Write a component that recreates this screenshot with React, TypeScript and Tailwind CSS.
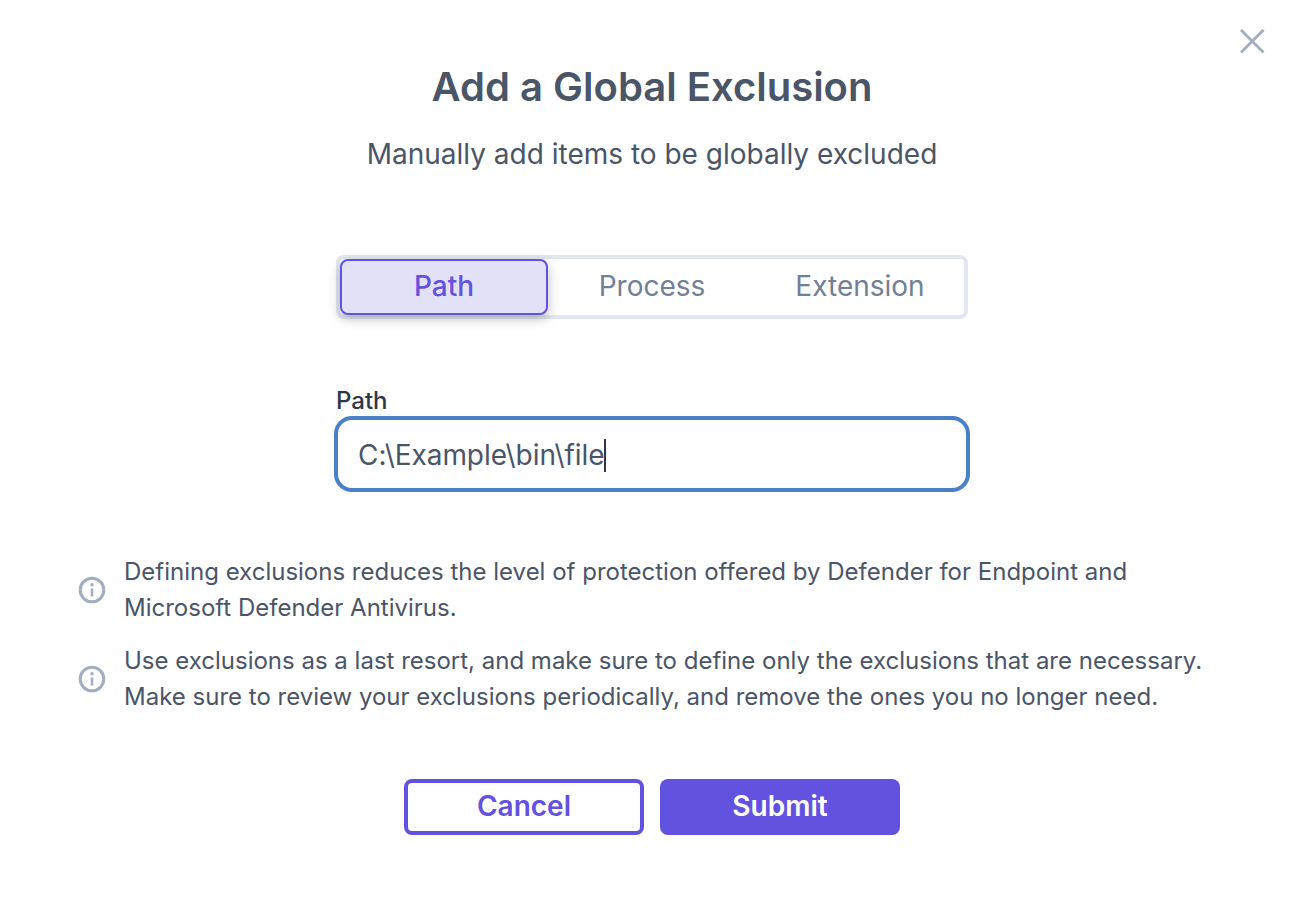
import React from "react";

function InfoIcon() {
  return (
    <svg width="28" height="28" viewBox="0 0 28 28" fill="none" className="shrink-0">
      <circle cx="14" cy="14" r="11.8" stroke="#a0aec0" strokeWidth="3" />
      <rect x="12.7" y="12.5" width="2.6" height="8" fill="#a0aec0" />
      <circle cx="14" cy="8.8" r="1.7" fill="#a0aec0" />
    </svg>
  );
}

function Notice({ lines }: { lines: string[] }) {
  return (
    <div className="flex items-center gap-[18px]">
      <InfoIcon />
      <p className="text-[24px] leading-[36px] text-[#4a5568]">
        {lines[0]}
        <br />
        {lines[1]}
      </p>
    </div>
  );
}

export default function App() {
  return (
    <div className="relative flex h-[906px] w-[1298px] flex-col items-center bg-white pl-[6px] pt-[60px] font-['Inter',sans-serif]">
      <svg width="28" height="28" viewBox="0 0 28 28" fill="none" className="absolute left-[1238px] top-[27px]">
        <path d="M3 3L25.5 25.5M25.5 3L3 25.5" stroke="#a0aec0" strokeWidth="2.8" />
      </svg>

      <h1 className="text-[40px] font-semibold leading-[54px] text-[#4a5568]">Add a Global Exclusion</h1>
      <p className="mt-[20px] text-[28px] leading-[40px] text-[#4a5568]">
        Manually add items to be globally excluded
      </p>

      <div className="mt-[81px] flex h-[64px] w-[632px] rounded-lg border-4 border-[#e2e8f0] bg-white text-[28px]">
        <button className="h-[56px] w-[208px] rounded-lg border-2 border-[#6351e0] bg-[#e3e1f8] pb-[2px] font-medium text-[#6351e0] shadow-[0_4px_12px_rgba(0,0,0,0.25)]">
          Path
        </button>
        <button className="h-[56px] w-[208px] pb-[2px] text-[#718096]">Process</button>
        <button className="h-[56px] w-[208px] pb-[2px] text-[#718096]">Extension</button>
      </div>

      <div className="mt-[66px] w-[636px]">
        <label className="block pl-[2px] text-[24px] font-medium leading-[31px] text-[#2d3748]">Path</label>
        <div className="flex h-[76px] items-center rounded-[18px] border-4 border-[#4a80c8] pl-[20px] pt-[2px] text-[28px] tracking-[-0.05px] text-[#4a5568]">
          <span>C:\Example\bin\file</span>
          <span className="-ml-px h-[33px] w-[2px] bg-[#2d3748]" />
        </div>
      </div>

      <div className="mt-[62px] flex w-[1292px] flex-col gap-[17px] pl-[72px]">
        <Notice
          lines={[
            "Defining exclusions reduces the level of protection offered by Defender for Endpoint and",
            "Microsoft Defender Antivirus.",
          ]}
        />
        <Notice
          lines={[
            "Use exclusions as a last resort, and make sure to define only the exclusions that are necessary.",
            "Make sure to review your exclusions periodically, and remove the ones you no longer need.",
          ]}
        />
      </div>

      <div className="mt-[64px] flex gap-4 text-[28px] font-semibold">
        <button className="h-[56px] w-[240px] rounded-lg border-4 border-[#6351e0] bg-white pb-[2px] text-[#6351e0]">Cancel</button>
        <button className="h-[56px] w-[240px] rounded-lg bg-[#6351e0] pb-[2px] text-white">Submit</button>
      </div>
    </div>
  );
}
